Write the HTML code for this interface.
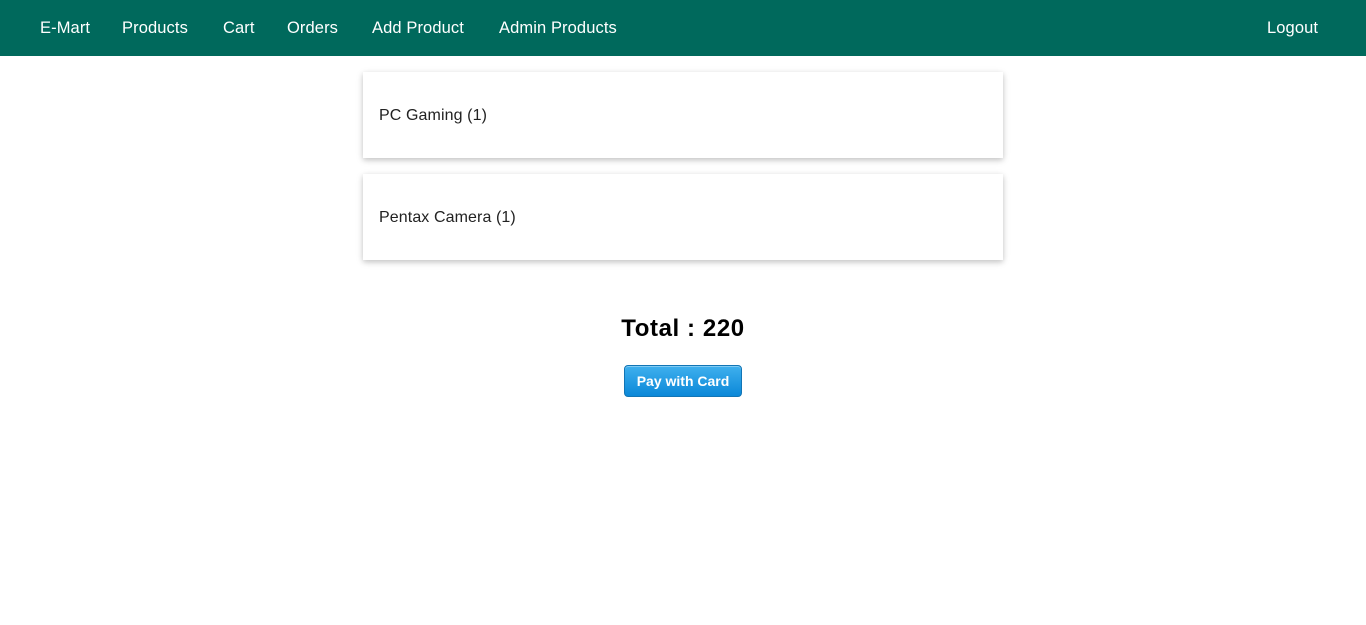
<!DOCTYPE html>
<html><head><meta charset="utf-8"><style>
*{margin:0;padding:0;box-sizing:border-box}
body{width:1366px;height:625px;background:#fff;font-family:"Liberation Sans",sans-serif;overflow:hidden;position:relative}
nav{position:absolute;left:0;top:0;width:1366px;height:56px;background:#00695c}
nav a{position:absolute;top:17px;color:#fff;font-size:16.5px;line-height:22px;text-decoration:none;white-space:nowrap;letter-spacing:.1px}
.card{position:absolute;left:363px;width:640px;height:86px;background:#fff;box-shadow:0 2px 5px rgba(0,0,0,.16),0 2px 8px rgba(0,0,0,.10);}
.card span{position:absolute;left:16px;top:34px;font-size:16px;color:#222;line-height:20px;letter-spacing:.1px}
.total{position:absolute;left:0;width:1366px;top:315px;text-align:center;font-size:24px;font-weight:bold;color:#000;letter-spacing:.6px}
.btn{position:absolute;left:624px;top:365px;width:118px;height:32px;border-radius:4px;border:1px solid #1275b5;background:linear-gradient(#3fb0ee,#0b88d8);color:#fff;font-weight:bold;font-size:14px;text-align:center;line-height:30px;box-shadow:inset 0 1px 0 rgba(255,255,255,.35)}
</style></head><body>
<nav>
<a style="left:40px">E-Mart</a>
<a style="left:122px">Products</a>
<a style="left:223px">Cart</a>
<a style="left:287px">Orders</a>
<a style="left:372px">Add Product</a>
<a style="left:499px">Admin Products</a>
<a style="left:1267px">Logout</a>
</nav>
<div class="card" style="top:72px"><span>PC Gaming (1)</span></div>
<div class="card" style="top:174px"><span>Pentax Camera (1)</span></div>
<div class="total">Total : 220</div>
<div class="btn">Pay with Card</div>
</body></html>
